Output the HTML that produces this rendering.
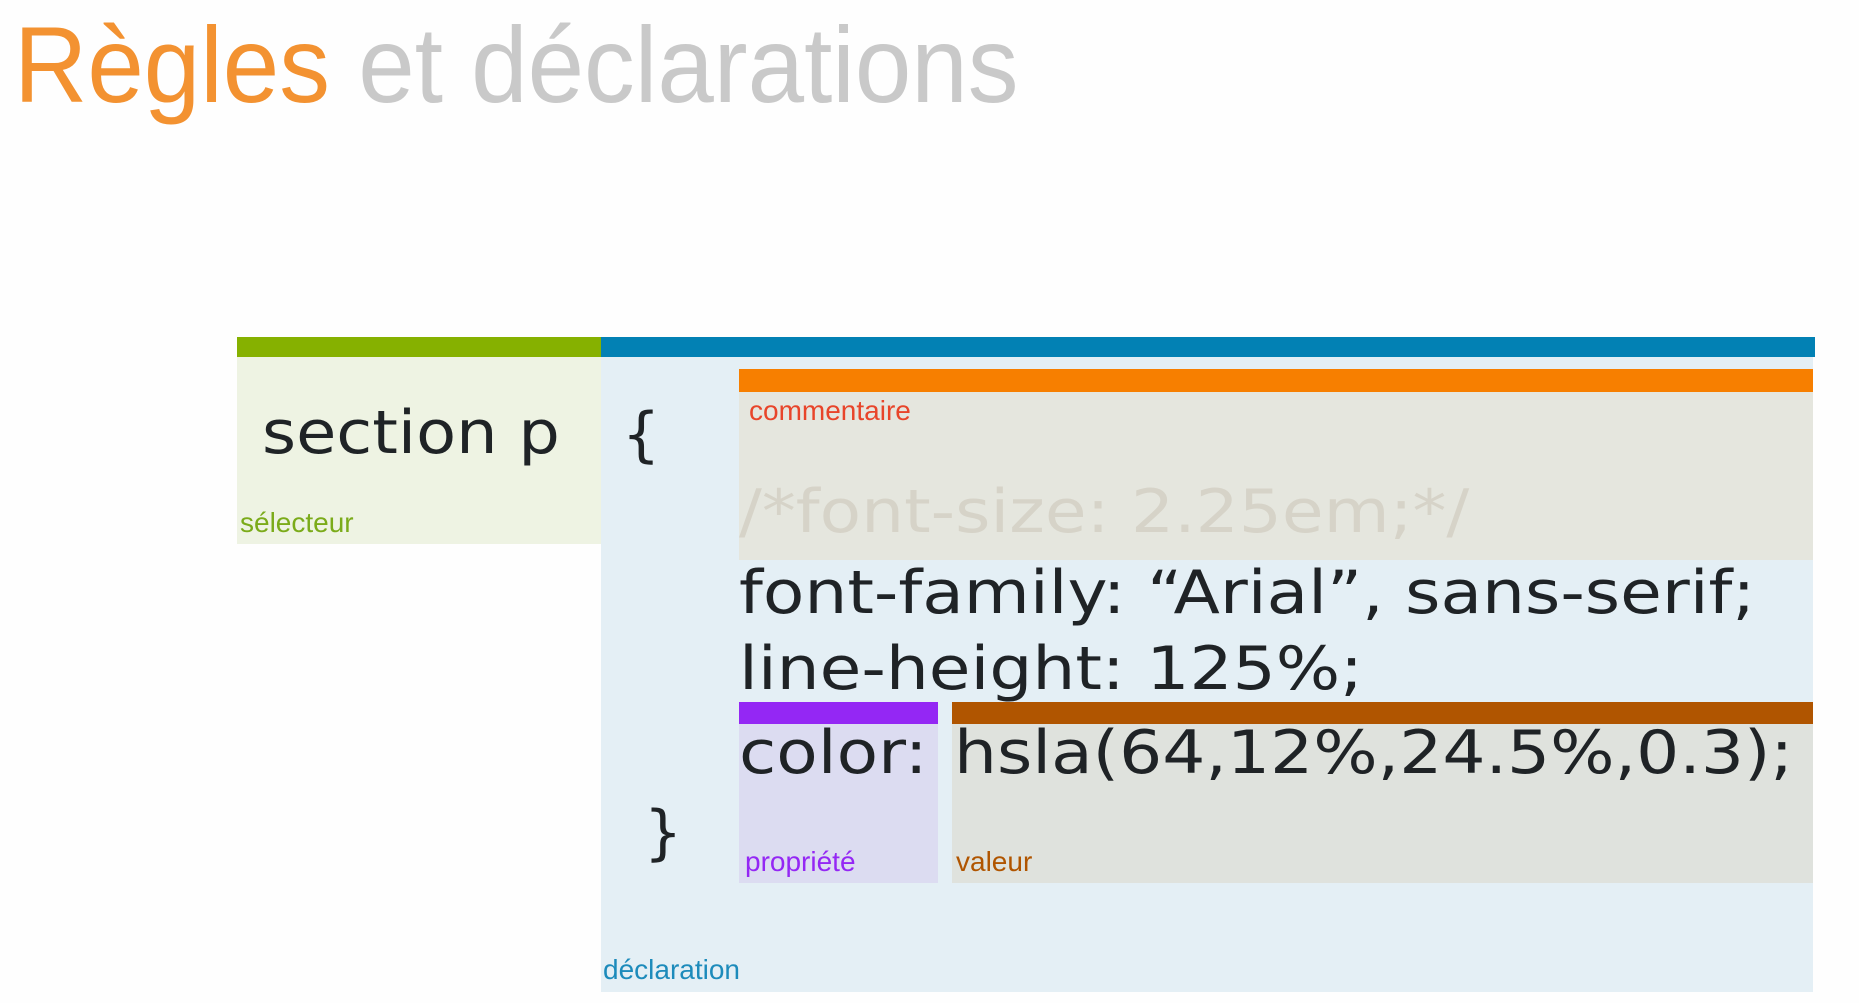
<!DOCTYPE html>
<html><head><meta charset="utf-8"><style>
html,body{margin:0;padding:0;width:1859px;height:1003px;overflow:hidden;background:#fefefe;position:relative}
div{position:absolute}
.t{font-family:"Liberation Sans",sans-serif;white-space:nowrap}
.c{font-family:"DejaVu Sans",sans-serif;font-size:60px;color:#1f2326;white-space:nowrap;line-height:1;transform:scaleX(1.13);transform-origin:0 0}
.lab{font-family:"Liberation Sans",sans-serif;font-size:28px;white-space:nowrap;line-height:1}
</style></head><body>
<div class="t" style="left:14px;top:0px;font-size:108px;line-height:1.2;transform:scaleX(0.94);transform-origin:0 0"><span style="color:#f39231">Règles</span> <span style="color:#c9c9c9">et déclarations</span></div>

<div style="left:237px;top:337px;width:364px;height:20px;background:#86b100"></div>
<div style="left:601px;top:337px;width:1214px;height:20px;background:#0281b4"></div>
<div style="left:237px;top:357px;width:364px;height:187px;background:#eef3e3"></div>
<div style="left:601px;top:357px;width:1212px;height:635px;background:#e4eff5"></div>

<div style="left:739px;top:369px;width:1074px;height:23px;background:#f77f00"></div>
<div style="left:739px;top:392px;width:1074px;height:168px;background:#e5e6de"></div>
<div style="left:739px;top:702px;width:199px;height:22px;background:#9427f4"></div>
<div style="left:739px;top:724px;width:199px;height:159px;background:#dcdcf1"></div>
<div style="left:952px;top:702px;width:861px;height:22px;background:#b05500"></div>
<div style="left:952px;top:724px;width:861px;height:159px;background:#dfe2dd"></div>

<div class="c" style="left:262px;top:403px;transform:scaleX(1.09)">section p</div>
<div class="c" style="left:622px;top:405px;transform:none">{</div>
<div class="c" style="left:644px;top:803px;transform:none">}</div>
<div class="c" style="left:739px;top:482px;color:#d6d3c8">/*font-size: 2.25em;*/</div>
<div class="c" style="left:739px;top:563px">font-family: “Arial”, sans-serif;</div>
<div class="c" style="left:739px;top:639px">line-height: 125%;</div>
<div class="c" style="left:739px;top:723px">color:</div>
<div class="c" style="left:954px;top:723px">hsla(64,12%,24.5%,0.3);</div>

<div class="lab" style="left:749px;top:397px;color:#e8452a">commentaire</div>
<div class="lab" style="left:240px;top:509px;color:#7bab1a">sélecteur</div>
<div class="lab" style="left:745px;top:848px;color:#9427f4">propriété</div>
<div class="lab" style="left:956px;top:848px;color:#b05500">valeur</div>
<div class="lab" style="left:603px;top:956px;color:#1d8bbb">déclaration</div>
</body></html>
